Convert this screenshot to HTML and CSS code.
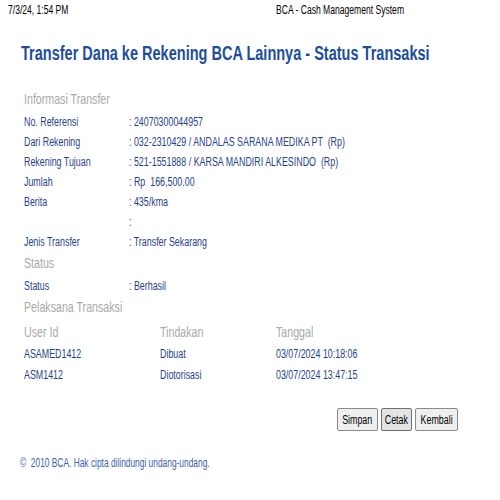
FILE: index.html
```html
<!DOCTYPE html>
<html>
<head>
<meta charset="utf-8">
<link rel="stylesheet" href="styles.css">
</head>
<body>
<div class="topbar">
  <span class="date"><span class="sq hd">7/3/24, 1:54 PM</span></span>
  <span class="sq hd">BCA - Cash Management System</span>
</div>
<h1 class="title"><span class="sq tt">Transfer Dana ke Rekening BCA Lainnya - Status Transaksi</span></h1>
<div class="content">
  <div class="section"><span class="sq">Informasi Transfer</span></div>
  <div class="rows">
    <div class="row"><span class="label"><span class="sq">No. Referensi</span></span><span class="sq">: 24070300044957</span></div>
    <div class="row"><span class="label"><span class="sq">Dari Rekening</span></span><span class="sq">: 032-2310429 / ANDALAS SARANA MEDIKA PT  (Rp)</span></div>
    <div class="row"><span class="label"><span class="sq">Rekening Tujuan</span></span><span class="sq">: 521-1551888 / KARSA MANDIRI ALKESINDO  (Rp)</span></div>
    <div class="row"><span class="label"><span class="sq">Jumlah</span></span><span class="sq">: Rp  166,500.00</span></div>
    <div class="row"><span class="label"><span class="sq">Berita</span></span><span class="sq">: 435/kma</span></div>
    <div class="row"><span class="label"></span><span class="sq">:</span></div>
    <div class="row"><span class="label"><span class="sq">Jenis Transfer</span></span><span class="sq">: Transfer Sekarang</span></div>
  </div>
  <div class="section"><span class="sq">Status</span></div>
  <div class="rows">
    <div class="row"><span class="label"><span class="sq">Status</span></span><span class="sq">: Berhasil</span></div>
  </div>
  <div class="section"><span class="sq">Pelaksana Transaksi</span></div>
  <div class="log">
    <div class="logrow head"><span><span class="sq">User Id</span></span><span><span class="sq">Tindakan</span></span><span><span class="sq">Tanggal</span></span></div>
    <div class="logrow"><span><span class="sq">ASAMED1412</span></span><span><span class="sq">Dibuat</span></span><span><span class="sq">03/07/2024 10:18:06</span></span></div>
    <div class="logrow"><span><span class="sq">ASM1412</span></span><span><span class="sq">Diotorisasi</span></span><span><span class="sq">03/07/2024 13:47:15</span></span></div>
  </div>
  <div class="actions">
    <button class="btn w-simpan"><span class="sq c">Simpan</span></button>
    <button class="btn w-cetak active"><span class="sq c">Cetak</span></button>
    <button class="btn w-kembali"><span class="sq c">Kembali</span></button>
  </div>
</div>
<div class="footer"><span class="sq ft">©  2010 BCA. Hak cipta dilindungi undang-undang.</span></div>
</body>
</html>
```
FILE: styles.css
```css
html, body {
  margin: 0;
  padding: 0;
  background: #fff;
  overflow: hidden;
}
body {
  font-family: "Liberation Sans", Arial, sans-serif;
  font-size: 12px;
  color: #000;
  width: 500px;
}
.sq {
  display: inline-block;
  white-space: pre;
  transform: scaleX(0.71);
  transform-origin: 0 50%;
}
.sq.c {
  transform-origin: 50% 50%;
}
.sq.hd {
  transform: scaleX(0.685);
}
.sq.tt {
  transform: scaleX(0.726);
}
.sq.ft {
  transform: scaleX(0.67);
}
.topbar {
  display: flex;
  padding: 2px 0 0 8px;
  height: 17px;
  line-height: 17px;
  font-size: 12.5px;
  white-space: nowrap;
  overflow: hidden;
}
.date {
  width: 268px;
  flex: none;
}
.title {
  margin: 21px 0 0 21px;
  font-size: 20px;
  line-height: 26px;
  font-weight: bold;
  color: #1d4e9e;
  white-space: nowrap;
  overflow: hidden;
}
.content {
  padding: 0 42px 0 24px;
  margin-top: 22px;
}
.section {
  color: #a9a9a9;
  font-size: 15px;
  line-height: 22px;
  height: 22px;
  margin-bottom: 2px;
}
.rows {
  display: flex;
  flex-direction: column;
}
.row {
  display: flex;
  height: 20px;
  line-height: 20px;
  color: #1f3f8f;
  font-size: 12.5px;
}
.label {
  width: 105px;
  flex: none;
}
.log {
  display: flex;
  flex-direction: column;
}
.logrow {
  display: grid;
  grid-template-columns: 136px 116px 1fr;
  height: 21px;
  line-height: 21px;
  color: #1f3f8f;
  font-size: 12.5px;
}
.logrow.head {
  color: #a9a9a9;
  font-size: 15px;
  height: 24px;
  line-height: 24px;
}
.actions {
  display: flex;
  justify-content: flex-end;
  gap: 3px;
  margin-top: 22px;
}
.btn {
  font-family: inherit;
  font-size: 12.5px;
  height: 23px;
  padding: 0;
  border: 1px solid #8a8a8a;
  border-radius: 2px;
  background: #efefef;
  color: #000;
  display: flex;
  align-items: center;
  justify-content: center;
  overflow: hidden;
}
.w-simpan { width: 41px; }
.w-cetak { width: 31px; }
.w-kembali { width: 43px; }
.btn.active {
  background: #e3e3e3;
  border-color: #6f6f6f;
}
.footer {
  margin: 24px 0 0 20px;
  color: #3a5fb0;
  font-size: 12.5px;
  line-height: 16px;
}
```
